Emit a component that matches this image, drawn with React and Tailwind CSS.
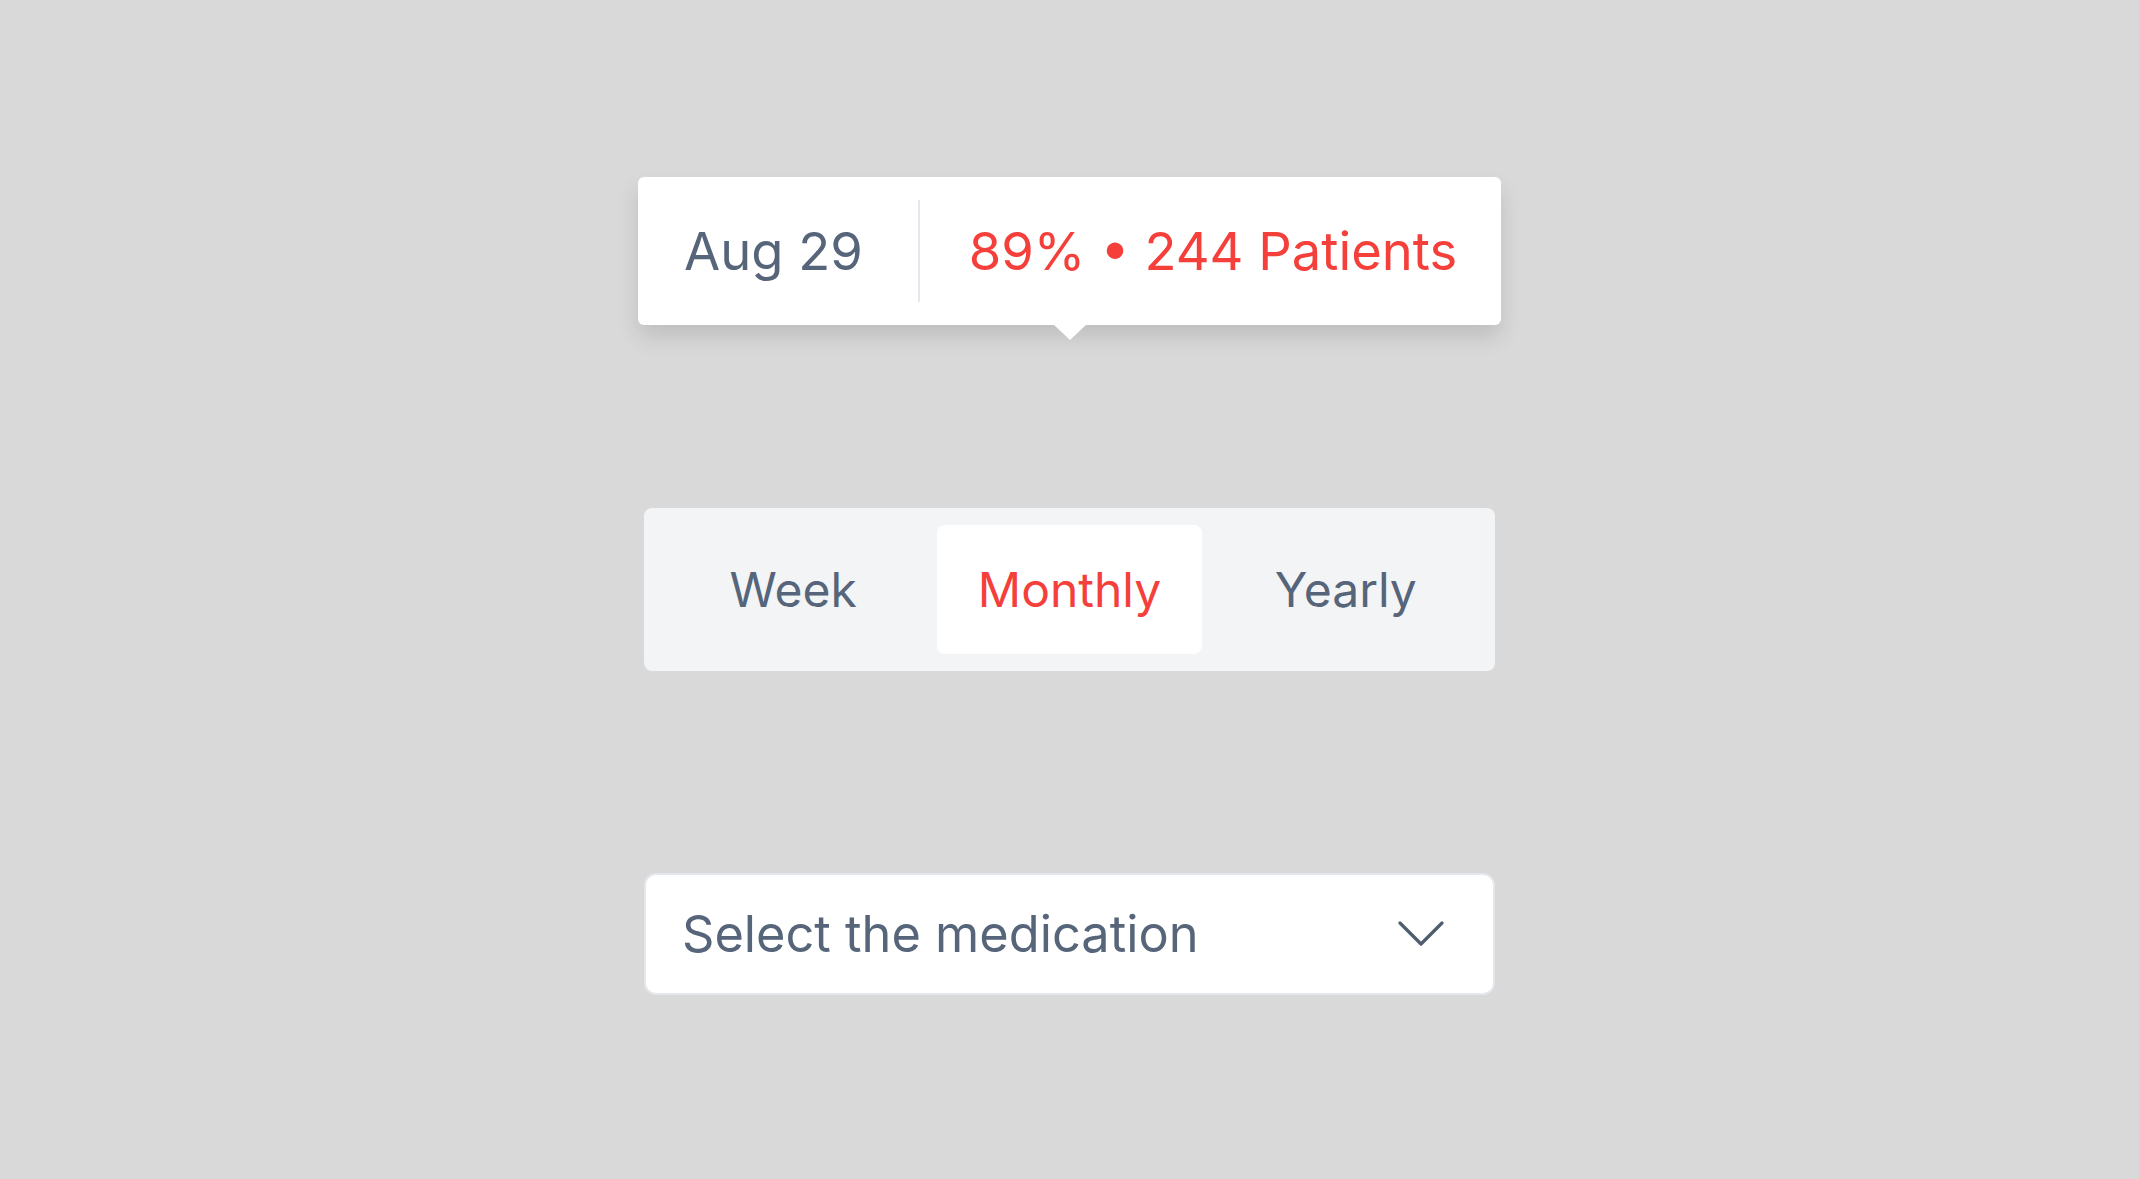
const tabs = ['Week', 'Monthly', 'Yearly'];

const Tooltip = () => (
  <div className="relative w-[863px] h-[148px] bg-white rounded-[6px] shadow-[0_12px_22px_rgba(0,0,0,0.12)] flex items-center pl-[46px]">
    <span className="text-[52.5px] leading-none text-[#56657a]">Aug 29</span>
    <div className="ml-[55px] w-[2px] h-[102px] bg-[#e3e7ee]" />
    <span className="ml-[49px] text-[52.5px] leading-none text-[#f43f3a]">
      89% • 244 Patients
    </span>
    <svg
      className="absolute left-1/2 -translate-x-1/2 top-full -mt-px"
      width="34"
      height="17"
      viewBox="0 0 34 17"
    >
      <path d="M0 0 L17 16 L34 0 Z" fill="#ffffff" />
    </svg>
  </div>
);

const Segmented = () => {
  const active = 'Monthly';
  return (
    <div className="w-[851px] h-[163px] bg-[#f3f4f6] rounded-[8px] p-[17px] grid grid-cols-3 gap-[12px]">
      {tabs.map((t) => (
        <button
          key={t}
          className={
            t === active
              ? 'bg-white rounded-[8px] text-[48px] text-[#f43f3a] flex items-center justify-center'
              : 'rounded-[8px] text-[48px] text-[#56657a] flex items-center justify-center'
          }
        >
          {t}
        </button>
      ))}
    </div>
  );
};

const Select = () => (
  <div className="w-[851px] h-[122px] bg-white border-2 border-[#e4e7ec] rounded-[12px] flex items-center justify-between pl-[36px] pr-[49px]">
    <span className="text-[50.5px] text-[#56657a]">Select the medication</span>
    <svg width="46" height="26" viewBox="0 0 46 26" fill="none">
      <path
        d="M2 2 L23 23 L44 2"
        stroke="#4f5d6f"
        strokeWidth="3.2"
        strokeLinecap="round"
        strokeLinejoin="round"
      />
    </svg>
  </div>
);

export default function App() {
  return (
    <div
      className="w-full h-[1179px] bg-[#d9d9d9] flex flex-col items-center pt-[177px]"
      style={{ fontFamily: 'Inter, "Noto Sans", sans-serif' }}
    >
      <Tooltip />
      <div className="mt-[183px]">
        <Segmented />
      </div>
      <div className="mt-[202px]">
        <Select />
      </div>
    </div>
  );
}
